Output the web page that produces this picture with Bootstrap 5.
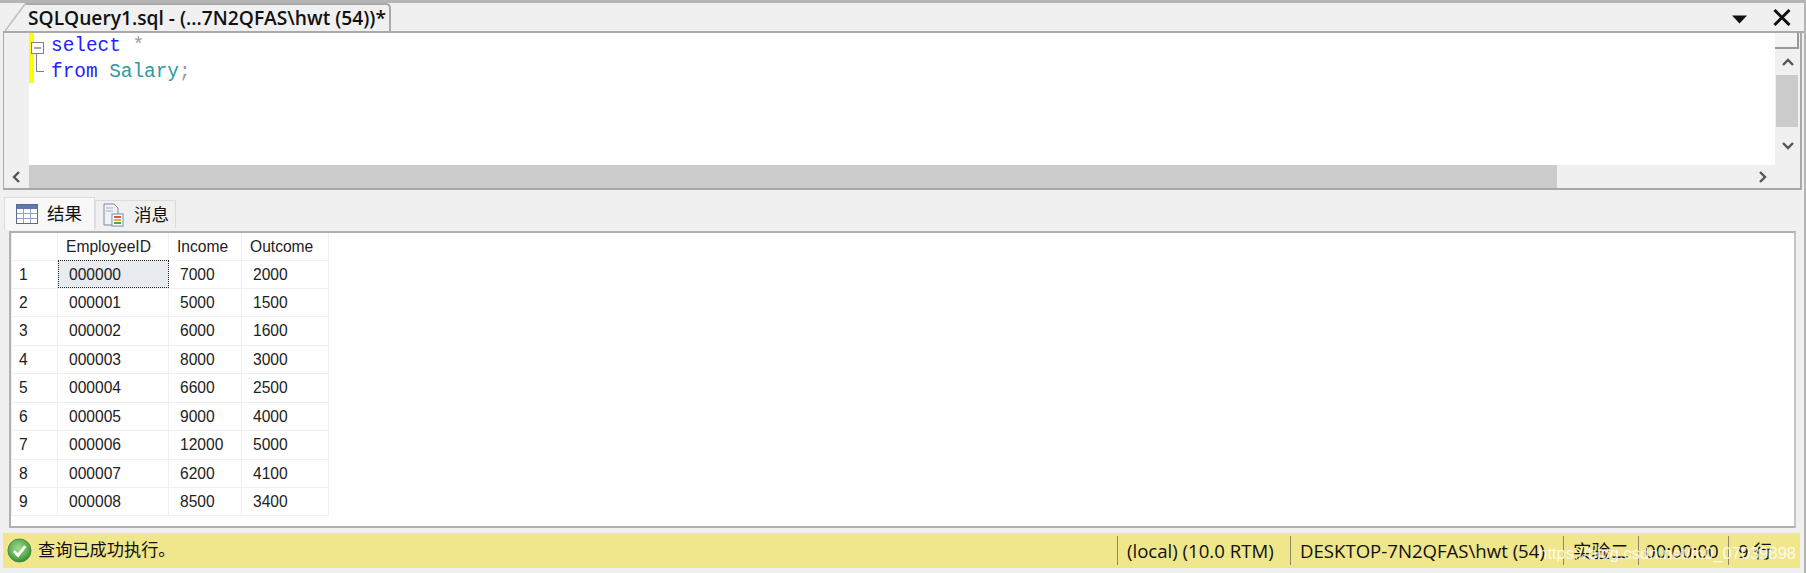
<!DOCTYPE html>
<html lang="zh">
<head>
  <meta charset="UTF-8">
  <title>SQLQuery1.sql</title>
  <link href="https://cdn.jsdelivr.net/npm/bootstrap@5.3.3/dist/css/bootstrap.min.css" rel="stylesheet">
  <style>
    html, body { height: 573px; overflow: hidden; }
    body { background: #f0f0f0; font-family: "Open Sans", "Noto Sans CJK SC", sans-serif; color: #111; }
    .app-frame { height: 573px; border-top: 3px solid #b4b4b4; border-right: 2px solid #b4b4b4; padding-left: 3px; }

    /* onglet du haut */
    .doc-tabs { height: 30px; padding-left: 2px; border-bottom: 2px solid #a9a9a9; }
    .doc-slant { width: 22px; height: 28px; flex: none; margin-right: -1px; }
    .doc-tab { height: 28px; width: 365px; padding: 0 0 2px 2px; border-top: 2px solid #a9a9a9; border-right: 2px solid #a9a9a9; border-top-right-radius: 5px; font-size: 19.2px; font-weight: 600; line-height: 25px; white-space: nowrap; }
    .doc-tools { width: 59px; margin-right: 13px; }

    /* editeur */
    .editor-pane { height: 157px; margin-right: 2px; border-left: 1px solid #a9a9a9; border-right: 2px solid #a9a9a9; border-bottom: 2px solid #a9a9a9; }
    .editor-main { height: 132px; }
    .editor-margin { width: 25px; flex: none; }
    .editor-body { background: #fff; }
    .change-bar { width: 5px; height: 50px; background: #ffff00; flex: none; }
    .fold-col { width: 21px; height: 50px; flex: none; margin-left: -4px; }
    .code-lines { font-family: "Liberation Mono", monospace; font-size: 19.4px; line-height: 25.5px; padding-top: 1px; white-space: pre; }
    .sql-kw { color: #2222ff; }
    .sql-tbl { color: #2b9c9c; }
    .sql-op { color: #9a9a9a; }
    .vscroll { width: 25px; flex: none; }
    .split-btn { height: 16px; margin-right: 1px; background: #f4f4f4; border-right: 2px solid #9a9a9a; border-bottom: 2px solid #9a9a9a; }
    .vscroll-up { height: 26px; }
    .vscroll-thumb { height: 52px; width: 22px; margin-left: 1px; background: #cbcbcb; }
    .hscroll { height: 23px; }
    .hscroll-btn { width: 25px; flex: none; }
    .hscroll-thumb { width: 1528px; background: #cbcbcb; flex: none; }
    .hscroll-right { margin-right: 33px; }

    /* onglets resultats */
    .result-tabs { height: 34px; margin-top: 7px; padding-left: 1px; }
    .res-tab { font-size: 17.5px; line-height: 1; border: 1px solid #dcdcdc; border-bottom: 0; }
    .res-tab-on { width: 91px; height: 33px; background: #f8f8f8; padding-left: 11px; gap: 9px; }
    .res-tab-off { width: 81px; height: 28px; margin-top: 3px; padding-left: 7px; gap: 9px; }

    /* grille */
    .grid-box { height: 297px; margin: 0 8px 0 6px; background: #fff; border: 2px solid #b0b0b0; border-right-color: #c4c4c4; }
    .res-grid { font-family: "Liberation Sans", sans-serif; font-size: 15.6px; color: #222; table-layout: fixed; width: 317px; margin: 0; border-collapse: collapse; }
    .res-grid th, .res-grid td { padding: 0; border: 1px solid #f0f0f0; font-weight: 400; vertical-align: middle; background: #fff; color: #222; box-shadow: none; white-space: nowrap; }
    .res-grid thead tr { height: 27px; }
    .res-grid tbody tr { height: 28.45px; }
    .res-grid thead th { padding-left: 8px; border-top: 0; }
    .res-grid tbody td { padding-left: 11px; }
    .res-grid tbody th { padding-left: 7px; }
    .res-grid td.cell-focus { background: #e8ecf0; outline: 1px dotted #222; outline-offset: -1px; }

    /* barre d'etat */
    .status-bar { height: 35px; margin-top: 5px; margin-right: 4px; background: #f0e68c; font-size: 18.6px; white-space: nowrap; }
    .status-msg { padding-left: 4px; gap: 6px; font-size: 17.2px; }
    .status-msg span { padding-bottom: 2px; }
    .status-cell { height: 29px; border-left: 1px solid #8f8a5a; padding-left: 9px; }
    .status-w1 { width: 173px; }
    .status-w2 { width: 273px; }
    .status-w3 { width: 75px; }
    .status-w4 { width: 90px; padding-left: 6px; }
    .status-w5 { width: 72px; }
    .watermark { right: 8px; top: 538px; font-family: "Liberation Sans", sans-serif; font-size: 16.5px; color: rgba(255,255,255,.85); }
  </style>
</head>
<body>
<div class="app-frame d-flex flex-column position-relative">

  <div class="doc-tabs d-flex align-items-end">
    <svg class="doc-slant" viewBox="0 0 22 28"><path d="M0 28 L20 1 H22 V28 Z" fill="#f0f0f0"/><path d="M0 28 L20 1 H22" fill="none" stroke="#bdbdbd" stroke-width="1.5"/></svg>
    <div class="doc-tab">SQLQuery1.sql - (...7N2QFAS\hwt (54))*</div>
    <div class="flex-grow-1"></div>
    <div class="doc-tools d-flex align-items-center justify-content-between h-100">
      <svg class="mt-1" width="15" height="9" viewBox="0 0 15 9"><path d="M0 0.5 H15 L7.5 8.5 Z" fill="#111"/></svg>
      <svg width="18" height="17" viewBox="0 0 18 17"><path d="M1.5 1 L16.5 16 M16.5 1 L1.5 16" stroke="#111" stroke-width="3" fill="none"/></svg>
    </div>
  </div>

  <div class="editor-pane d-flex flex-column">
    <div class="editor-main d-flex">
      <div class="editor-margin"></div>
      <div class="editor-body flex-grow-1 d-flex">
        <div class="change-bar"></div>
        <svg class="fold-col" viewBox="0 0 21 50">
          <rect x="1.5" y="9.5" width="12" height="11" fill="#fff" stroke="#808080"/>
          <path d="M4 15 H11" stroke="#555"/>
          <path d="M6.5 21 V38.5 H14" stroke="#808080" fill="none"/>
        </svg>
        <div class="code-lines flex-grow-1"><span class="sql-kw">select</span> <span class="sql-op">*</span>
<span class="sql-kw">from</span> <span class="sql-tbl">Salary</span><span class="sql-op">;</span></div>
      </div>
      <div class="vscroll d-flex flex-column">
        <div class="split-btn"></div>
        <div class="vscroll-up d-flex align-items-center justify-content-center">
          <svg width="12" height="8" viewBox="0 0 12 8"><path d="M1 7 L6 2 L11 7" fill="none" stroke="#555" stroke-width="2.4"/></svg>
        </div>
        <div class="vscroll-thumb"></div>
        <div class="flex-grow-1 d-flex align-items-center justify-content-center">
          <svg width="12" height="8" viewBox="0 0 12 8"><path d="M1 1 L6 6 L11 1" fill="none" stroke="#555" stroke-width="2.4"/></svg>
        </div>
      </div>
    </div>
    <div class="hscroll d-flex">
      <div class="hscroll-btn d-flex align-items-center justify-content-center">
        <svg width="9" height="12" viewBox="0 0 9 12"><path d="M7 1 L2 6 L7 11" fill="none" stroke="#555" stroke-width="2.4"/></svg>
      </div>
      <div class="hscroll-thumb"></div>
      <div class="flex-grow-1 d-flex align-items-center justify-content-end">
        <svg class="hscroll-right" width="9" height="12" viewBox="0 0 9 12"><path d="M2 1 L7 6 L2 11" fill="none" stroke="#555" stroke-width="2.4"/></svg>
      </div>
    </div>
  </div>

  <div class="result-tabs d-flex align-items-start">
    <div class="res-tab res-tab-on d-flex align-items-center">
      <svg width="22" height="20" viewBox="0 0 22 20">
        <rect x="0.5" y="0.5" width="21" height="19" fill="#fff" stroke="#5b6b8c"/>
        <rect x="1" y="1" width="20" height="4" fill="#5f78ad"/>
        <path d="M1 9.5 H21 M1 14.5 H21 M7.5 5 V19 M14.5 5 V19" stroke="#8fa3c4"/>
      </svg>
      <span>结果</span>
    </div>
    <div class="res-tab res-tab-off d-flex align-items-center">
      <svg width="22" height="24" viewBox="0 0 22 24">
        <path d="M1 1 H11 L15 5 V22 H1 Z" fill="#eef2f8" stroke="#7c8aa0"/>
        <rect x="9" y="11" width="11" height="12" fill="#fff" stroke="#7c8aa0"/>
        <path d="M11 14 H18" stroke="#d9534f" stroke-width="2"/><path d="M11 17 H18" stroke="#e0b040" stroke-width="2"/><path d="M11 20 H18" stroke="#4aa564" stroke-width="2"/>
        <path d="M3 5 H10 M3 8 H10" stroke="#9fb0c8"/>
      </svg>
      <span>消息</span>
    </div>
  </div>

  <div class="grid-box">
    <table class="table res-grid">
      <colgroup><col style="width:46px"><col style="width:111px"><col style="width:73px"><col style="width:87px"></colgroup>
      <thead>
        <tr><th></th><th>EmployeeID</th><th>Income</th><th>Outcome</th></tr>
      </thead>
      <tbody id="gridRows"></tbody>
    </table>
  </div>

  <div class="status-bar d-flex align-items-center">
    <div class="status-msg flex-grow-1 d-flex align-items-center">
      <svg width="25" height="25" viewBox="0 0 26 26">
        <defs><radialGradient id="okFill" cx="0.45" cy="0.4" r="0.65"><stop offset="0" stop-color="#a5d98f"/><stop offset="0.7" stop-color="#55a94a"/><stop offset="1" stop-color="#267a26"/></radialGradient></defs>
        <circle cx="13" cy="13" r="12" fill="url(#okFill)" stroke="#4a8a4a"/>
        <path d="M7 13.5 L11.5 18 L19 8.5" fill="none" stroke="#fff" stroke-width="3"/>
      </svg>
      <span>查询已成功执行。</span>
    </div>
    <div class="status-cell status-w1 d-flex align-items-center">(local) (10.0 RTM)</div>
    <div class="status-cell status-w2 d-flex align-items-center">DESKTOP-7N2QFAS\hwt (54)</div>
    <div class="status-cell status-w3 d-flex align-items-center">实验二</div>
    <div class="status-cell status-w4 d-flex align-items-center">00:00:00</div>
    <div class="status-cell status-w5 d-flex align-items-center">9 行</div>
  </div>

  <div class="watermark position-absolute">https://blog.csdn.net/m0_07039898</div>
</div>
<script src="https://cdn.jsdelivr.net/npm/bootstrap@5.3.3/dist/js/bootstrap.bundle.min.js"></script>
<script>
  const rows = [
    ["000000", 7000, 2000], ["000001", 5000, 1500], ["000002", 6000, 1600],
    ["000003", 8000, 3000], ["000004", 6600, 2500], ["000005", 9000, 4000],
    ["000006", 12000, 5000], ["000007", 6200, 4100], ["000008", 8500, 3400]
  ];
  document.getElementById("gridRows").innerHTML = rows.map((r, i) =>
    `<tr><th>${i + 1}</th><td${i === 0 ? ' class="cell-focus"' : ''}>${r[0]}</td><td>${r[1]}</td><td>${r[2]}</td></tr>`
  ).join("");
</script>
</body>
</html>
